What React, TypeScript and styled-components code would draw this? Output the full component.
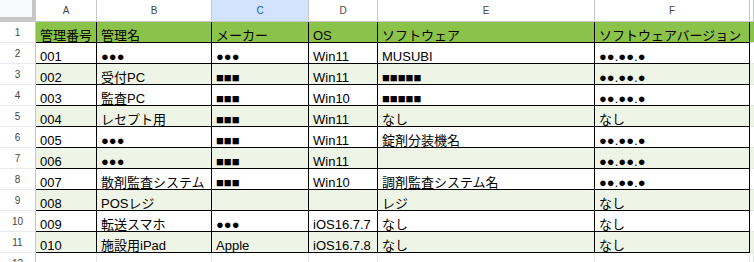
import * as React from "react";
import styled, { createGlobalStyle } from "styled-components";

const GlobalStyle = createGlobalStyle`
  html, body {
    margin: 0;
    padding: 0;
    background: #fff;
    overflow: hidden;
  }
  body {
    font-family: "Liberation Sans", "Noto Sans CJK JP", sans-serif;
  }
`;

const COLS = "36px 61px 115px 97px 69px 217px 155px 1fr";

const Sheet = styled.div`
  width: 754px;
  height: 262px;
  overflow: hidden;
`;

const Row = styled.div`
  display: grid;
  grid-template-columns: ${COLS};
  height: 21px;
`;

const HeadRow = styled(Row)`
  height: 22px;
`;

const Corner = styled.div`
  box-sizing: border-box;
  background: #f8f9fa;
  border-right: 4px solid #c7c7c7;
  border-bottom: 5px solid #c7c7c7;
`;

const ColHead = styled.div<{ $selected?: boolean }>`
  box-sizing: border-box;
  display: flex;
  align-items: center;
  justify-content: center;
  border-right: 1px solid #c4c7c5;
  border-bottom: 1px solid #c4c7c5;
  background: ${p => (p.$selected ? "#d3e3fd" : "#fff")};
  color: ${p => (p.$selected ? "#0b57d0" : "#444746")};
  font-family: "Liberation Sans", sans-serif;
  font-size: 10px;
`;

const RowHead = styled.div`
  box-sizing: border-box;
  display: flex;
  align-items: center;
  justify-content: center;
  border-right: 1px solid #c4c7c5;
  border-bottom: 1px solid #e8eaed;
  background: #fff;
  color: #444746;
  font-size: 10px;
`;

const Cell = styled.div<{ $bg: string; $edge?: boolean }>`
  box-sizing: border-box;
  display: flex;
  align-items: flex-end;
  padding: 0 4px;
  white-space: nowrap;
  overflow: hidden;
  background: ${p => p.$bg};
  border-right: ${p => (p.$edge ? "none" : "1px solid #000")};
  border-bottom: ${p => (p.$edge ? "1px solid #e2e3e3" : "1px solid #000")};
  color: #000;
  font-size: 13px;
  line-height: 13px;
`;

const BlankCell = styled.div`
  box-sizing: border-box;
  border-right: 1px solid #e2e3e3;
  border-bottom: 1px solid #e2e3e3;
`;

const letters = ["A", "B", "C", "D", "E", "F", ""];

const data: string[][] = [
  ["管理番号", "管理名", "メーカー", "OS", "ソフトウェア", "ソフトウェアバージョン"],
  ["001", "●●●", "●●●", "Win11", "MUSUBI", "●●.●●.●"],
  ["002", "受付PC", "■■■", "Win11", "■■■■■", "●●.●●.●"],
  ["003", "監査PC", "■■■", "Win10", "■■■■■", "●●.●●.●"],
  ["004", "レセプト用", "■■■", "Win11", "なし", "なし"],
  ["005", "●●●", "■■■", "Win11", "錠剤分装機名", "●●.●●.●"],
  ["006", "●●●", "■■■", "Win11", "", "●●.●●.●"],
  ["007", "散剤監査システム", "■■■", "Win10", "調剤監査システム名", "●●.●●.●"],
  ["008", "POSレジ", "", "", "レジ", "なし"],
  ["009", "転送スマホ", "●●●", "iOS16.7.7", "なし", "なし"],
  ["010", "施設用iPad", "Apple", "iOS16.7.8", "なし", "なし"],
];

function rowColor(i: number) {
  if (i === 0) return "#8bc34a";
  return i % 2 === 0 ? "#eef5e6" : "#ffffff";
}

export default function App() {
  return (
    <Sheet>
      <GlobalStyle />
      <HeadRow>
        <Corner />
        {letters.map((l, i) => (
          <ColHead key={i} $selected={l === "C"}>
            {l}
          </ColHead>
        ))}
      </HeadRow>
      {data.map((cells, r) => (
        <Row key={r}>
          <RowHead>{r + 1}</RowHead>
          {cells.map((c, i) => (
            <Cell key={i} $bg={rowColor(r)}>
              {c}
            </Cell>
          ))}
          <Cell $bg={rowColor(r)} $edge />
        </Row>
      ))}
      <Row>
        <RowHead>12</RowHead>
        {letters.map((_, i) => (
          <BlankCell key={i} />
        ))}
      </Row>
    </Sheet>
  );
}
